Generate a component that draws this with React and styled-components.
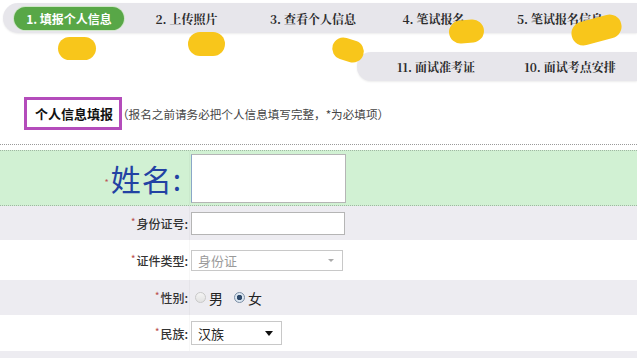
import React from "react";
import styled, { createGlobalStyle } from "styled-components";

const GlobalStyle = createGlobalStyle`
  body {
    margin: 0;
    background: #fff;
    font-family: "Noto Sans CJK SC", "Noto Sans", sans-serif;
    color: #333;
  }
`;

const Page = styled.div`
  position: relative;
  width: 637px;
  height: 358px;
  overflow: hidden;
`;

const StepBar = styled.div`
  display: flex;
  align-items: center;
  height: 30px;
  margin: 3px 0 0 3px;
  padding-left: 11px;
  background: #e7e6eb;
  border-radius: 15px 0 0 15px;
  box-shadow: 0 1px 2px rgba(0, 0, 0, 0.08);
`;

const SubBar = styled(StepBar)`
  margin: 19px 0 0 357px;
  height: 29px;
  padding-left: 0;
  border-radius: 14px 0 0 14px;
`;

const Step = styled.div`
  flex: none;
  width: ${(p) => p.w}px;
  text-align: center;
  font-family: "Noto Serif CJK SC", "Noto Sans CJK SC", serif;
  font-size: 12px;
  font-weight: 700;
  color: #2b2b2b;
  white-space: nowrap;
`;

const ActiveStep = styled.div`
  flex: none;
  width: 110px;
  height: 23px;
  line-height: 23px;
  border-radius: 12px;
  background: #58a747;
  box-shadow: 0 0 0 1px #cfe6c8;
  color: #fff;
  text-align: center;
  font-size: 12px;
  font-weight: 700;
  white-space: nowrap;
`;

const Blob = styled.div`
  position: absolute;
  left: ${(p) => p.x}px;
  top: ${(p) => p.y}px;
  width: ${(p) => p.w}px;
  height: ${(p) => p.h}px;
  border-radius: 999px;
  background: #f8c61b;
  transform: rotate(${(p) => p.r || 0}deg);
`;

const SectionHead = styled.div`
  display: flex;
  align-items: center;
  margin: 16px 0 0 24px;
`;

const SectionTitle = styled.div`
  border: 3px solid #b44cbb;
  height: 27px;
  padding: 0 6px 0 8px;
  line-height: 27px;
  font-size: 13px;
  font-weight: 700;
  color: #111;
`;

const SectionNote = styled.div`
  margin-left: -5px;
  font-size: 11.6px;
  color: #444;
`;

const DottedRule = styled.div`
  margin-top: 14px;
  border-top: 1px dotted #9a9a9a;
`;

const Form = styled.div`
  margin-top: 5px;
  display: flex;
  flex-direction: column;
`;

const toneBg = { green: "#d1f1d3", grey: "#edecf1", white: "#fff" };

const Row = styled.div`
  display: grid;
  grid-template-columns: 189px 1fr;
  align-items: center;
  height: ${(p) => p.h}px;
  background: ${(p) => toneBg[p.tone]};
  border-top: ${(p) => (p.tone === "green" ? "1px dotted #9fb7a2" : "none")};
  border-bottom: ${(p) => (p.tone === "green" ? "1px dotted #9fb7a2" : "none")};
`;

const Label = styled.div`
  text-align: right;
  padding-right: ${(p) => (p.big ? 7 : 1)}px;
  font-size: ${(p) => (p.big ? 30 : 12)}px;
  font-weight: ${(p) => (p.big ? 400 : 500)};
  letter-spacing: ${(p) => (p.big ? 1 : 0)}px;
  color: ${(p) => (p.big ? "#2342a3" : "#333")};
  white-space: nowrap;
`;

const Star = styled.span`
  font-size: 9px;
  color: #b55;
  vertical-align: ${(p) => (p.big ? "middle" : "top")};
  margin-right: 1px;
`;

const Field = styled.div`
  display: flex;
  align-items: center;
  height: 100%;
  padding-left: 1px;
  border-left: 1px solid rgba(0, 0, 0, 0.03);
`;

const TextBox = styled.div`
  width: ${(p) => p.w}px;
  height: ${(p) => p.h}px;
  box-sizing: border-box;
  background: #fff;
  border: 1px solid #b5b5b5;
  border-left-color: ${(p) => (p.focus ? "#8aa7c7" : "#b5b5b5")};
`;

const Select = styled.div`
  display: flex;
  align-items: center;
  justify-content: space-between;
  box-sizing: border-box;
  width: ${(p) => p.w}px;
  height: ${(p) => p.h}px;
  padding: 0 8px 0 6px;
  background: #fff;
  border: 1px solid #c8c8c8;
  font-size: 13px;
  color: ${(p) => (p.muted ? "#9a9a9a" : "#222")};
`;

const Caret = styled.span`
  width: 0;
  height: 0;
  border-left: ${(p) => (p.small ? 3 : 4)}px solid transparent;
  border-right: ${(p) => (p.small ? 3 : 4)}px solid transparent;
  border-top: ${(p) => (p.small ? 3 : 5)}px solid ${(p) => (p.small ? "#aaa" : "#111")};
`;

const Radios = styled.div`
  display: flex;
  align-items: center;
  gap: 11px;
  padding-left: 4px;
  font-size: 14px;
  color: #222;
`;

const RadioItem = styled.label`
  display: flex;
  align-items: center;
  gap: 3px;
`;

const RadioDot = styled.span`
  width: 11px;
  height: 11px;
  box-sizing: border-box;
  border-radius: 50%;
  border: 1px solid ${(p) => (p.on ? "#7b8ea5" : "#c9c9c9")};
  background: ${(p) =>
    p.on
      ? "radial-gradient(circle, #2f4a6b 0 2.5px, #dbe6f1 3px)"
      : "linear-gradient(#f4f4f4, #e2e2e2)"};
`;

export default function App() {
  return (
    <Page>
      <GlobalStyle />
      <StepBar>
        <ActiveStep>1. 填报个人信息</ActiveStep>
        <Step w={125}>2. 上传照片</Step>
        <Step w={128}>3. 查看个人信息</Step>
        <Step w={113}>4. 笔试报名</Step>
        <Step w={140}>5. 笔试报名信息</Step>
      </StepBar>
      <SubBar>
        <Step w={158}>11. 面试准考证</Step>
        <Step w={110}>10. 面试考点安排</Step>
      </SubBar>

      <SectionHead>
        <SectionTitle>个人信息填报</SectionTitle>
        <SectionNote>（报名之前请务必把个人信息填写完整，*为必填项）</SectionNote>
      </SectionHead>
      <DottedRule />

      <Form>
        <Row tone="green" h={54}>
          <Label big>
            <Star big>*</Star>姓名:
          </Label>
          <Field>
            <TextBox w={155} h={49} focus />
          </Field>
        </Row>
        <Row tone="grey" h={34}>
          <Label>
            <Star>*</Star>身份证号:
          </Label>
          <Field>
            <TextBox w={154} h={23} />
          </Field>
        </Row>
        <Row tone="white" h={40}>
          <Label>
            <Star>*</Star>证件类型:
          </Label>
          <Field>
            <Select w={152} h={21} muted>
              身份证
              <Caret small />
            </Select>
          </Field>
        </Row>
        <Row tone="grey" h={35}>
          <Label>
            <Star>*</Star>性别:
          </Label>
          <Field>
            <Radios>
              <RadioItem>
                <RadioDot />男
              </RadioItem>
              <RadioItem>
                <RadioDot on />女
              </RadioItem>
            </Radios>
          </Field>
        </Row>
        <Row tone="white" h={36}>
          <Label>
            <Star>*</Star>民族:
          </Label>
          <Field>
            <Select w={91} h={24}>
              汉族
              <Caret />
            </Select>
          </Field>
        </Row>
        <Row tone="grey" h={20} />
      </Form>

      <Blob x={58} y={37} w={38} h={23} />
      <Blob x={188} y={32} w={37} h={24} />
      <Blob x={332} y={39} w={32} h={22} r={18} />
      <Blob x={449} y={20} w={35} h={23} r={-5} />
      <Blob x={571} y={18} w={51} h={24} r={-15} />
    </Page>
  );
}
